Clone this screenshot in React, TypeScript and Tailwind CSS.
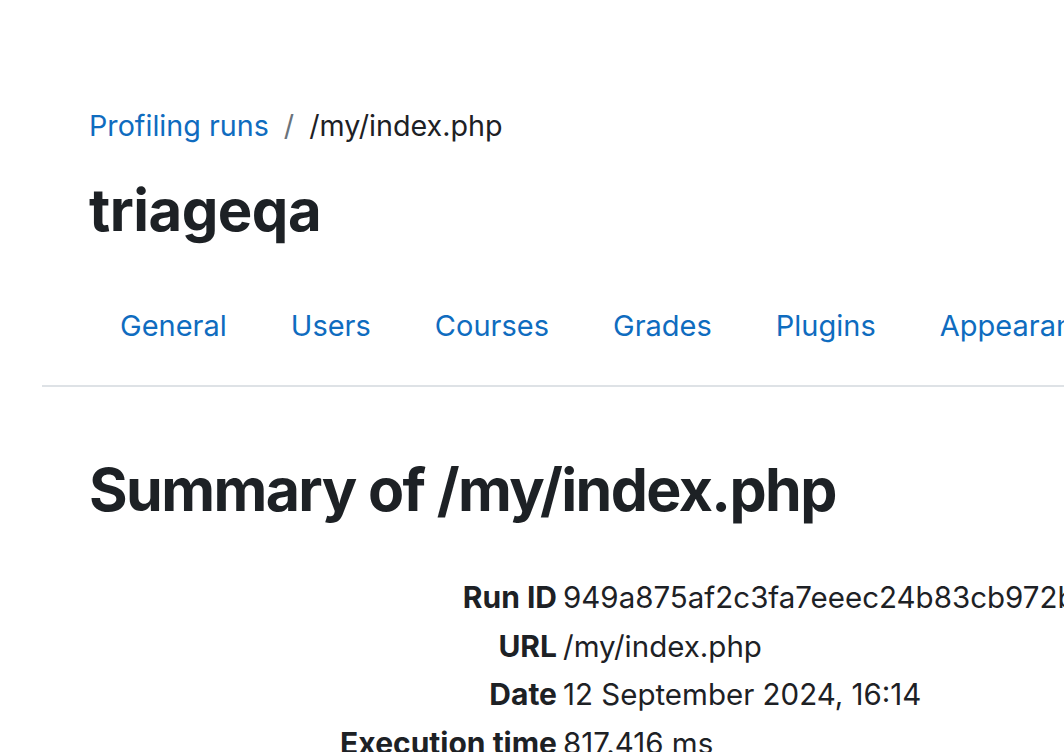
const tabs = ['General', 'Users', 'Courses', 'Grades', 'Plugins', 'Appearance', 'Server', 'Reports', 'Development'];

const rows = [
  { label: 'Run ID', value: '949a875af2c3fa7eeec24b83cb972b1e' },
  { label: 'URL', value: '/my/index.php' },
  { label: 'Date', value: '12 September 2024, 16:14' },
  { label: 'Execution time', value: '817.416 ms' },
];

export default function App() {
  return (
    <div className="h-[752px] w-[1064px] overflow-hidden bg-white text-[#1d2125] font-['Inter',sans-serif]">
      <div className="pl-[89px] pt-[106px]">
        <nav className="flex items-center text-[28.7px] leading-[40px] whitespace-nowrap">
          <a className="text-[#0f6cbf]">Profiling runs</a>
          <span className="px-[15px] text-[#6a737b]">/</span>
          <span>/my/index.php</span>
        </nav>
        <h1 className="mt-[32px] text-[58px] leading-[64px] font-bold tracking-[-0.5px]">triageqa</h1>
      </div>

      <div className="mt-[64px] ml-[42px] border-b-2 border-[#dee2e6]">
        <ul className="flex pl-[46px] pb-[39px] whitespace-nowrap">
          {tabs.map((t) => (
            <li key={t} className="px-[32px] text-[29px] leading-[40px] text-[#0f6cbf]">
              {t}
            </li>
          ))}
        </ul>
      </div>

      <div className="pl-[89px] pt-[65px]">
        <h2 className="text-[59px] leading-[76px] font-bold tracking-[-1.6px] whitespace-nowrap">Summary of /my/index.php</h2>
        <dl className="mt-[45px] grid grid-cols-[474px_auto] text-[29.5px] leading-[48.5px] whitespace-nowrap">
          {rows.map((r) => (
            <div key={r.label} className="contents">
              <dt className="pr-[6px] text-right text-[30px] font-bold">{r.label}</dt>
              <dd>{r.value}</dd>
            </div>
          ))}
        </dl>
      </div>
    </div>
  );
}
